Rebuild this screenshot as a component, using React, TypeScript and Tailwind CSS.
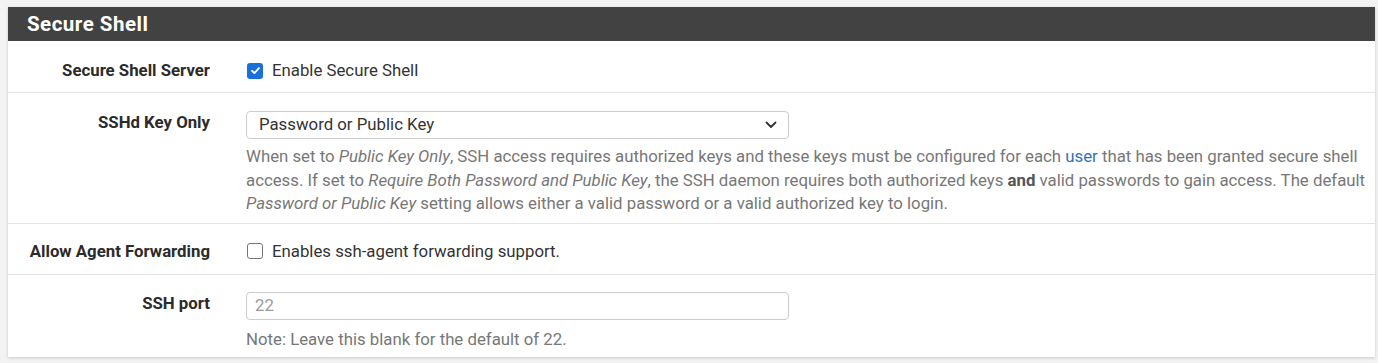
import React from "react";

const font = { fontFamily: "Roboto, 'Liberation Sans', sans-serif" };

function Checkbox({ checked }: { checked?: boolean }) {
  if (checked) {
    return (
      <span className="flex h-[16px] w-[16px] shrink-0 items-center justify-center rounded-[3px] bg-[#1b6fd8]">
        <svg width="11" height="11" viewBox="0 0 12 12" fill="none">
          <path d="M2.2 6.3 4.8 8.8 9.8 3.4" stroke="white" strokeWidth="2" strokeLinecap="round" strokeLinejoin="round" />
        </svg>
      </span>
    );
  }
  return <span className="h-[16px] w-[16px] shrink-0 rounded-[3px] border border-[#757575] bg-white" />;
}

function Row({ label, children, className }: { label: string; children: React.ReactNode; className: string }) {
  return (
    <div className={"flex " + className}>
      <div className="w-[218px] shrink-0 pr-4 text-right text-[16.8px] leading-[23px] font-bold text-[#2b2b2b]">
        {label}
      </div>
      <div className="flex-1 pl-5">{children}</div>
    </div>
  );
}

function Help({ children, className }: { children: React.ReactNode; className: string }) {
  return <div className={"text-[16.8px] leading-[23.6px] text-[#777777] " + className}>{children}</div>;
}

export default function App() {
  return (
    <div className="min-h-[363px] bg-[#f3f3f3] pl-[8px] pt-[7px]" style={font}>
      <div className="w-[1367px] bg-white shadow-[0_1px_3px_rgba(0,0,0,0.18)]">

        {/* Heading */}

        <div className="flex h-[34px] items-center bg-[#424242] px-[19px]">
          <h2 className="text-[20.5px] font-bold tracking-[0.5px] text-white">Secure Shell</h2>
        </div>

        <Row label="Secure Shell Server" className="border-b border-[#e3e3e3] pt-[18px] pb-[10px]">
          <label className="flex h-[23px] items-center gap-[9px] pl-[1px] text-[16.8px] text-[#333333]">
            <Checkbox checked />
            Enable Secure Shell
          </label>
        </Row>

        <Row label="SSHd Key Only" className="border-b border-[#e3e3e3] pt-[18px] pb-[7px]">
          <div className="flex h-[28px] w-[543px] items-center justify-between rounded-[4px] border border-[#cccccc] pr-[11px] pl-[12px] text-[16.8px] text-[#333333]">
            <span>Password or Public Key</span>
            <svg width="12" height="8" viewBox="0 0 12 8" fill="none">
              <path d="M1.5 1.5 6 6 10.5 1.5" stroke="#333" strokeWidth="1.8" strokeLinecap="round" strokeLinejoin="round" />
            </svg>
          </div>
          <Help className="mt-[6px]">
            When set to <i>Public Key Only</i>, SSH access requires authorized keys and these keys must be configured for
            each <span className="text-[#2f73bd]">user</span> that has been granted secure shell access. If set to{" "}
            <i>Require Both Password and Public Key</i>, the SSH daemon requires both authorized keys{" "}
            <b className="text-[#555555]">and</b> valid passwords to gain access. The default <i>Password or Public Key</i>{" "}
            setting allows either a valid password or a valid authorized key to login.
          </Help>
        </Row>

        <Row label="Allow Agent Forwarding" className="border-b border-[#e3e3e3] pt-[16px] pb-[11px]">
          <label className="flex h-[23px] items-center gap-[9px] pl-[1px] text-[16.8px] text-[#333333]">
            <Checkbox />
            Enables ssh-agent forwarding support.
          </label>
        </Row>

        <Row label="SSH port" className="pt-[17px] pb-[6px]">
          <div className="flex h-[28px] w-[543px] items-center rounded-[4px] border border-[#cccccc] px-[8px] text-[16.8px] text-[#9a9a9a]">
            22
          </div>
          <Help className="mt-[8px]">Note: Leave this blank for the default of 22.</Help>
        </Row>

      </div>
    </div>
  );
}
